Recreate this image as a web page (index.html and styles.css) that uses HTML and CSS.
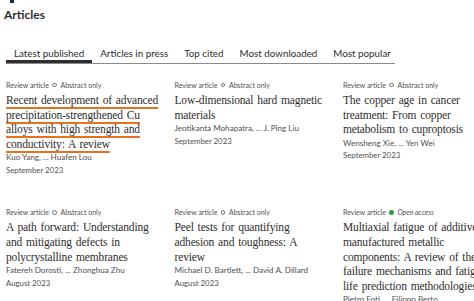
FILE: index.html
```html
<!DOCTYPE html>
<html lang="en">
<head>
  <meta charset="UTF-8" />
  <title>Articles</title>
  <link rel="stylesheet" href="styles.css">
</head>
<body>
  <div class="page">
    <div class="brand-mark"></div>
    <h2 class="heading">Articles</h2>

    <div class="tabs">
      <div class="tab active">Latest published</div>
      <div class="tab">Articles in press</div>
      <div class="tab">Top cited</div>
      <div class="tab">Most downloaded</div>
      <div class="tab">Most popular</div>
    </div>

    <div class="cards">
      <div class="card">
        <div class="meta">Review article <span class="ring"></span> Abstract only</div>
        <a class="title hovered">Recent development of advanced <span class="nowrap">precipitation-strengthened</span> Cu alloys with high strength and conductivity: A review</a>
        <div class="authors">Kuo Yang, ... Huafen Lou</div>
        <div class="date">September 2023</div>
      </div>
      <div class="card">
        <div class="meta">Review article <span class="ring"></span> Abstract only</div>
        <a class="title">Low-dimensional hard magnetic materials</a>
        <div class="authors">Jeotikanta Mohapatra, ... J. Ping Liu</div>
        <div class="date">September 2023</div>
      </div>
      <div class="card">
        <div class="meta">Review article <span class="ring"></span> Abstract only</div>
        <a class="title">The copper age in cancer treatment: From copper metabolism to cuproptosis</a>
        <div class="authors">Wensheng Xie, ... Yen Wei</div>
        <div class="date">September 2023</div>
      </div>
      <div class="card">
        <div class="meta">Review article <span class="ring"></span> Abstract only</div>
        <a class="title">A path forward: Understanding and mitigating defects in polycrystalline membranes</a>
        <div class="authors">Fatereh Dorosti, ... Zhonghua Zhu</div>
        <div class="date">August 2023</div>
      </div>
      <div class="card">
        <div class="meta">Review article <span class="ring"></span> Abstract only</div>
        <a class="title">Peel tests for quantifying adhesion and toughness: A review</a>
        <div class="authors">Michael D. Bartlett, ... David A. Dillard</div>
        <div class="date">August 2023</div>
      </div>
      <div class="card">
        <div class="meta">Review article <span class="dot"></span> <span class="open">Open access</span></div>
        <a class="title">Multiaxial fatigue of additively manufactured metallic components: A review of the failure mechanisms and fatigue life prediction methodologies</a>
        <div class="authors">Pietro Foti, ... Filippo Berto</div>
        <div class="date">August 2023</div>
      </div>
    </div>
  </div>
</body>
</html>
```

FILE: styles.css
```css
* {
  box-sizing: border-box;
}

body {
  margin: 0;
  overflow: hidden;
  background: #fff;
  color: #2e2e2e;
  font-family: Lato, 'Open Sans', sans-serif;
}

.page {
  width: 560px;
  padding: 0 0 0 6px;
}

.brand-mark {
  width: 4px;
  height: 3px;
  margin-left: 4px;
  background: #0c2d57;
}

.heading {
  margin: 3px 0 0 -2px;
  font-size: 12px;
  line-height: 18px;
  font-weight: 700;
  color: #2e2e2e;
}

.tabs {
  display: flex;
  width: 389px;
  margin-top: 22px;
  border-bottom: 1px solid #8a8a8a;
}

.tab {
  padding: 0 8px 3px;
  font-size: 9.8px;
  line-height: 14px;
  color: #2e2e2e;
  white-space: nowrap;
}

.tab.active {
  box-shadow: inset 0 -3px 0 #2e2e2e;
}

.cards {
  display: grid;
  grid-template-columns: repeat(3, 154px);
  column-gap: 14.5px;
  row-gap: 31px;
  margin-top: 16px;
}

.meta {
  display: flex;
  align-items: center;
  gap: 2.5px;
  font-size: 7px;
  line-height: 10px;
  color: #505050;
  white-space: nowrap;
}

.ring {
  width: 4.5px;
  height: 4.5px;
  margin: 0 1px;
  border: 1px solid #7a7a7a;
  border-radius: 50%;
}

.dot {
  width: 4.5px;
  height: 4.5px;
  margin: 0 1px;
  border-radius: 50%;
  background: #2e9a43;
}

.open {
  font-style: italic;
}

.title {
  display: block;
  margin-top: 3px;
  font-family: 'Liberation Serif', serif;
  font-size: 11.5px;
  letter-spacing: -0.15px;
  word-spacing: 1.2px;
  line-height: 14.6px;
  color: #2e2e2e;
}

.nowrap {
  white-space: nowrap;
}

.title.hovered {
  text-decoration: underline;
  text-decoration-color: #e9711c;
  text-decoration-thickness: 1.5px;
  text-underline-offset: 3px;
}

.authors,
.date {
  line-height: 12.5px;
  color: #505050;
}

.authors {
  font-size: 8.1px;
}

.date {
  font-size: 7.8px;
}
```
